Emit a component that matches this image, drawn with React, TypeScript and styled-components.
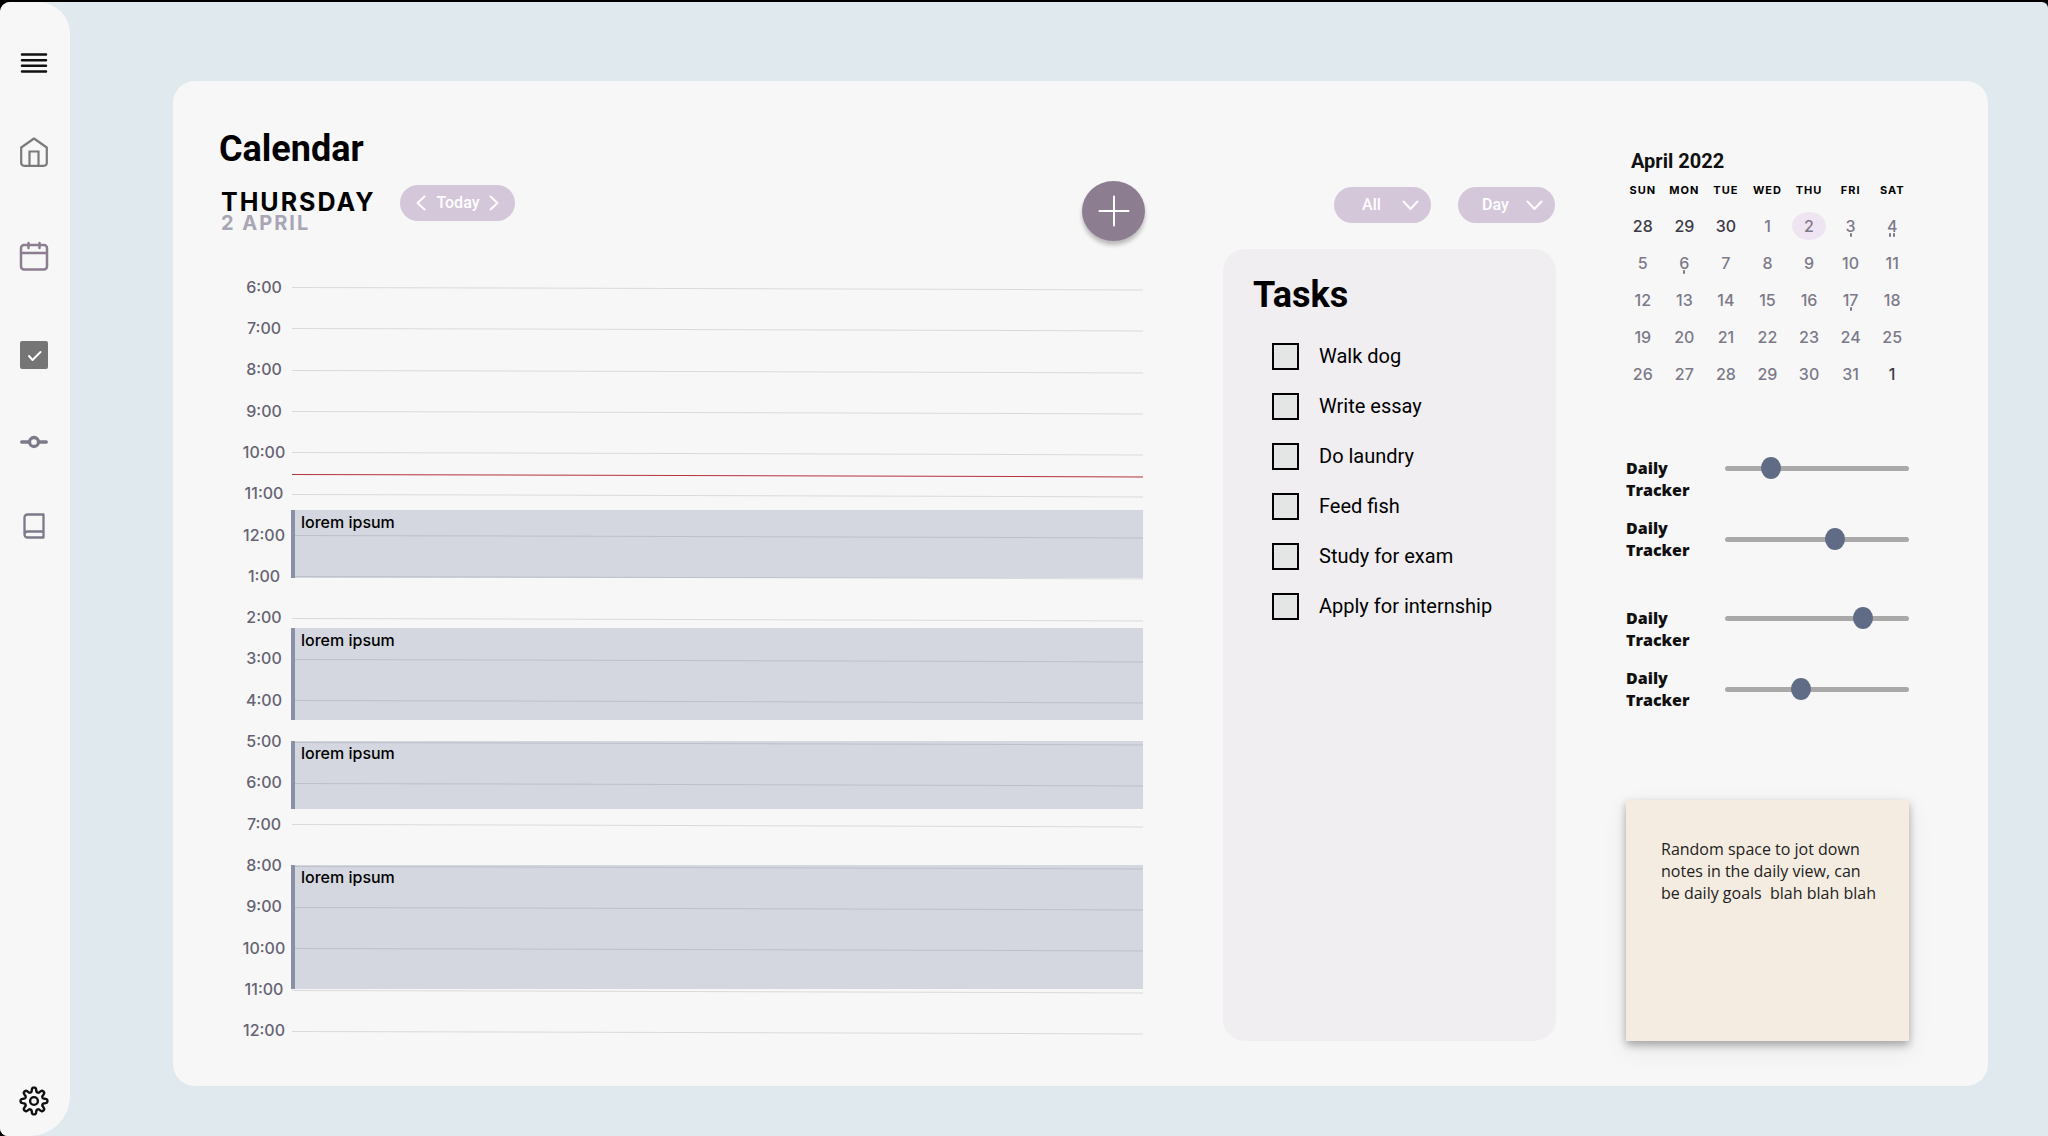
import React from "react";
import styled, { createGlobalStyle } from "styled-components";

const colors = {
  page: "#e0e9ee",
  surface: "#f7f7f7",
  lilac: "#d4c7d9",
  plum: "#8d7d91",
  ink: "#101010",
  muted: "#7c7a89",
  slate: "#606b85",
};

const plex = `Inter, "Liberation Sans", sans-serif`;
const roboto = `Roboto, "Liberation Sans", sans-serif`;
const rounded = `"Open Sans", "Noto Sans", sans-serif`;

const GlobalStyle = createGlobalStyle`
  *, *::before, *::after { box-sizing: border-box; }
  body { margin: 0; background: #000; color: #000; font-family: ${roboto}; }
  h1, h2, p, ul { margin: 0; padding: 0; }
  button, input, select, textarea { font: inherit; color: inherit; margin: 0; }
  button { border: 0; padding: 0; background: none; cursor: pointer; }
`;

const Frame = styled.div`
  border-top: 2px solid #000;
  min-height: 100vh;
  display: flex;
  background: #000;
`;

const Shell = styled.div`
  flex: 1;
  display: flex;
  background: ${colors.page};
  border-radius: 10px 6px 0 8px;
  overflow: hidden;
`;

const Sidebar = styled.nav`
  flex: 0 0 70px;
  display: flex;
  flex-direction: column;
  align-items: center;
  padding: 45px 3px 19px 0;
  background: ${colors.surface};
  border-radius: 0 32px 40px 0;
`;

const NavButton = styled.button<{ $gap?: number; $color: string; $last?: boolean }>`
  width: 32px;
  height: 32px;
  display: grid;
  place-items: center;
  color: ${(p) => p.$color};
  margin-top: ${(p) => (p.$last ? "auto" : `${p.$gap ?? 0}px`)};

  svg { display: block; }
`;

const Main = styled.main`
  flex: 1;
  min-width: 0;
  display: flex;
  padding: 79px 60px 50px 103px;
`;

const Panel = styled.div`
  flex: 1;
  min-width: 0;
  display: grid;
  grid-template-columns: minmax(0, 1fr) 333px 283px;
  column-gap: 70px;
  padding: 47px 79px 35px 46px;
  background: ${colors.surface};
  border-radius: 22px;
`;

const Schedule = styled.section`
  display: flex;
  flex-direction: column;
  padding-right: 8px;
`;

const PageTitle = styled.h1`
  font: 700 36px/42px ${roboto};
`;

const DayBar = styled.div`
  display: flex;
  align-items: center;
  margin-top: 11px;
  padding-left: 2px;
`;

const DateBlock = styled.div`
  font-family: ${plex};
  font-weight: 700;
  letter-spacing: 2px;
`;

const Weekday = styled.p`
  font-size: 25px;
  line-height: 23px;
`;

const DayMonth = styled.p`
  font-size: 20px;
  line-height: 18px;
  color: #a8a6b5;
`;

const Stepper = styled.div`
  display: flex;
  align-items: center;
  justify-content: space-between;
  align-self: flex-start;
  width: 115px;
  height: 36px;
  margin: 4px 0 0 25px;
  padding: 0 16px;
  border-radius: 18px;
  background: ${colors.lilac};
  color: #fff;
  font: 500 16px/20px ${roboto};

  svg { display: block; }
`;

const AddButton = styled.button`
  width: 63px;
  height: 60px;
  margin-left: auto;
  display: grid;
  place-items: center;
  border-radius: 50%;
  background: ${colors.plum};
  color: #fff;
  box-shadow: 0 4px 4px rgba(0, 0, 0, 0.25);
`;

const Timeline = styled.div`
  position: relative;
  flex: 1;
  margin-top: 25px;
  padding-left: 17px;
  display: grid;
  grid-auto-rows: minmax(32px, 1fr);
`;

const HourRow = styled.div`
  display: flex;
  align-items: center;
  padding-right: 2px;
`;

const HourLabel = styled.span`
  flex: 0 0 56px;
  text-align: center;
  color: #666472;
  font: 500 16px/20px ${plex};
`;

const HourLine = styled.span`
  flex: 1;
  height: 1px;
  margin-top: 2px;
  background: #dadada;
  transform: skewY(0.16deg);
  transform-origin: left;
`;

const EventLayer = styled.div`
  position: absolute;
  top: calc(100% / 38);
  bottom: calc(100% / 38);
  left: 72px;
  right: 2px;
`;

const EventBlock = styled.article`
  position: absolute;
  left: 0;
  right: 0;
  padding-left: 6px;
  border-left: 4px solid #8991a5;
  background: rgba(94, 106, 142, 0.23);
  background-clip: padding-box;
  font: 500 16px/24px ${plex};
`;

const NowLine = styled.div`
  position: absolute;
  left: 1px;
  right: 0;
  height: 1px;
  background: #b8333b;
  transform: skewY(0.16deg);
  transform-origin: left;
`;

const TasksColumn = styled.section`
  display: flex;
  flex-direction: column;
  padding: 59px 0 10px;
`;

const Filters = styled.div`
  display: flex;
  justify-content: flex-end;
  gap: 27px;
  padding-right: 1px;
`;

const FilterBox = styled.div`
  position: relative;
  color: #fff;

  svg {
    position: absolute;
    right: 12px;
    top: 13px;
    pointer-events: none;
  }
`;

const FilterSelect = styled.select`
  appearance: none;
  display: block;
  width: 97px;
  height: 36px;
  padding: 0 22px 0 0;
  border: 0;
  border-radius: 18px;
  background: ${colors.lilac};
  font: 500 16px/20px ${roboto};
  text-align: center;
  text-align-last: center;
`;

const TaskCard = styled.div`
  flex: 1;
  margin-top: 26px;
  padding: 25px 30px;
  border-radius: 22px;
  background: #f0eef1;
`;

const TaskTitle = styled.h2`
  font: 700 36px/42px ${roboto};
`;

const TaskList = styled.ul`
  list-style: none;
  display: grid;
  gap: 23px;
  margin-top: 27px;
  padding-left: 19px;
`;

const TaskLabel = styled.label`
  display: flex;
  align-items: center;
  gap: 20px;
  font: 400 20px/27px ${roboto};
`;

const TaskCheck = styled.input`
  appearance: none;
  width: 27px;
  height: 27px;
  border: 2px solid #000;
  background: #e4e5e5;

  &:checked { background: ${colors.slate}; }
`;

const Aside = styled.aside`
  display: flex;
  flex-direction: column;
  padding: 21px 0 10px;
`;

const MonthTitle = styled.h2`
  padding-left: 5px;
  color: ${colors.ink};
  font: 700 20px/24px ${roboto};
`;

const MonthTable = styled.table`
  width: calc(100% + 8px);
  margin: 0 -4px;
  border-collapse: collapse;
  table-layout: fixed;
  font-family: ${plex};

  th {
    height: 34px;
    padding: 0;
    font-size: 11px;
    font-weight: 700;
    letter-spacing: 1px;
  }

  td {
    height: 37px;
    padding: 0;
    text-align: center;
  }
`;

const DayButton = styled.button<{ $outside: boolean; $selected: boolean }>`
  position: relative;
  width: 34px;
  height: 28px;
  border-radius: 50%;
  background: ${(p) => (p.$selected ? "#efe5f2" : "transparent")};
  color: ${(p) => (p.$outside ? "#3c3a47" : colors.muted)};
  font: 500 16px/28px ${plex};
`;

const Marks = styled.span`
  position: absolute;
  left: 0;
  right: 0;
  bottom: 3px;
  display: flex;
  justify-content: center;
  gap: 2px;

  i {
    width: 2px;
    height: 4px;
    border-radius: 1px;
    background: ${colors.muted};
  }
`;

const Trackers = styled.div`
  display: grid;
  gap: 46px;
  margin-top: 65px;
`;

const TrackerPair = styled.div`
  display: grid;
  gap: 16px;
`;

const TrackerRow = styled.label<{ $centered: boolean }>`
  display: grid;
  grid-template-columns: 72px 1fr;
  column-gap: 27px;
  align-items: ${(p) => (p.$centered ? "center" : "start")};
  color: ${colors.ink};
  font: 800 16px/22px ${rounded};
`;

const Slider = styled.input`
  appearance: none;
  width: 100%;
  height: 22px;
  background: transparent;

  &::-webkit-slider-runnable-track {
    height: 5px;
    border-radius: 3px;
    background: #a9a9a9;
  }

  &::-webkit-slider-thumb {
    appearance: none;
    width: 20px;
    height: 22px;
    margin-top: -9px;
    border-radius: 50%;
    background: ${colors.slate};
  }
`;

const Note = styled.textarea`
  display: block;
  width: 100%;
  height: 241px;
  margin-top: auto;
  padding: 38px 30px 38px 35px;
  border: 0;
  outline: 0;
  resize: none;
  background: #f5ece1;
  color: #222;
  font: 400 16px/22px ${rounded};
  box-shadow: 0 4px 8px rgba(0, 0, 0, 0.3), 0 8px 24px rgba(0, 0, 0, 0.08);
`;

const MenuIcon = () => (
  <svg width="28" height="20" viewBox="0 0 28 20" stroke="currentColor" strokeWidth="2.5" strokeLinecap="round">
    <path d="M2 1.600h24M2 7.200h24M2 12.800h24M2 18.400h24" />
  </svg>
);

const HomeIcon = () => (
  <svg width="28" height="30" viewBox="0 0 28 30" fill="none" stroke="currentColor" strokeWidth="2.2" strokeLinejoin="round">
    <path d="M1.200 10.500 14 1.500l12.800 9V26a3 3 0 0 1-3 2.800H4.200a3 3 0 0 1-3-2.800Z" />
    <path d="M9.500 29V14.500h9V29" strokeLinejoin="miter" />
  </svg>
);

const CalendarIcon = () => (
  <svg width="30" height="30" viewBox="0 0 30 30" fill="none" stroke="currentColor" strokeWidth="2.5" strokeLinecap="round">
    <rect x="2" y="4" width="26" height="24.500" rx="3" />
    <path d="M2 12h26M9.500 2v5M20.500 2v5" />
  </svg>
);

const CheckIcon = () => (
  <svg width="28" height="28" viewBox="0 0 28 28" fill="none">
    <rect width="28" height="28" rx="2" fill="currentColor" />
    <path d="m9 15 3.500 4 8-8" stroke="#fff" strokeWidth="2" strokeLinecap="round" strokeLinejoin="round" />
  </svg>
);

const CommitIcon = () => (
  <svg width="28" height="14" viewBox="0 0 28 14" fill="none" stroke="currentColor" strokeWidth="3.300" strokeLinecap="round">
    <circle cx="14" cy="7" r="4.500" />
    <path d="M1.700 7H9M19 7h7.300" />
  </svg>
);

const BookIcon = () => (
  <svg width="22" height="26" viewBox="0 0 22 26" fill="none" stroke="currentColor" strokeWidth="2.300" strokeLinejoin="round">
    <path d="M20.500 18.500H4.500a3 3 0 0 0 0 6h16V1.500h-16a3 3 0 0 0-3 3v17" />
  </svg>
);

const gearPath = (() => {
  const points: string[] = [];
  const steps = 160;
  for (let i = 0; i < steps; i += 1) {
    const a = (i / steps) * Math.PI * 2;
    const wave = Math.tanh(1.8 * Math.cos(a * 8)) / Math.tanh(1.8);
    const r = 11.3 + 2.1 * wave;
    points.push(`${(15 + r * Math.sin(a)).toFixed(2)} ${(15 - r * Math.cos(a)).toFixed(2)}`);
  }
  return `M${points.join("L")}Z`;
})();

const GearIcon = () => (
  <svg width="30" height="30" viewBox="0 0 30 30" fill="none" stroke="currentColor" strokeWidth="2.400" strokeLinejoin="round">
    <path d={gearPath} />
    <circle cx="15" cy="15" r="3.900" />
  </svg>
);

const Chevron = ({ d, width, height }: { d: string; width: number; height: number }) => (
  <svg width={width} height={height} viewBox={`0 0 ${width} ${height}`} fill="none" stroke="currentColor" strokeWidth="2" strokeLinecap="round" strokeLinejoin="round">
    <path d={d} />
  </svg>
);

const hours = [6, 7, 8, 9, 10, 11, 12, 1, 2, 3, 4, 5, 6, 7, 8, 9, 10, 11, 12];
const span = hours.length - 1;
const percent = (value: number) => `${(value / span) * 100}%`;

const events = [
  { start: 5.4, end: 7.05 },
  { start: 8.26, end: 10.5 },
  { start: 11, end: 12.65 },
  { start: 14, end: 17 },
];

const tasks = ["Walk dog", "Write essay", "Do laundry", "Feed fish", "Study for exam", "Apply for internship"];

const weekdays = ["SUN", "MON", "TUE", "WED", "THU", "FRI", "SAT"];
const weeks = [
  [28, 29, 30, 1, 2, 3, 4],
  [5, 6, 7, 8, 9, 10, 11],
  [12, 13, 14, 15, 16, 17, 18],
  [19, 20, 21, 22, 23, 24, 25],
  [26, 27, 28, 29, 30, 31, 1],
];
const marks: Record<number, number> = { 3: 1, 4: 2, 6: 1, 17: 1 };

const trackerPairs = [
  [22, 61],
  [78, 40],
];

const Filter = ({ label, options }: { label: string; options: string[] }) => (
  <FilterBox>
    <FilterSelect aria-label={label} defaultValue={options[0]}>
      {options.map((option) => (
        <option key={option}>{option}</option>
      ))}
    </FilterSelect>
    <Chevron width={17} height={11} d="M1.500 1.500 8.500 9l7-7.500" />
  </FilterBox>
);

export default function App() {
  return (
    <Frame>
      <GlobalStyle />
      <Shell>
        <Sidebar aria-label="Main">
          <NavButton aria-label="Menu" $color="#101010"><MenuIcon /></NavButton>
          <NavButton aria-label="Home" $gap={57} $color="#7b7b7b"><HomeIcon /></NavButton>
          <NavButton aria-label="Calendar" $gap={72} $color={colors.plum}><CalendarIcon /></NavButton>
          <NavButton aria-label="Tasks" $gap={67} $color="#757575"><CheckIcon /></NavButton>
          <NavButton aria-label="Trackers" $gap={55} $color={colors.muted}><CommitIcon /></NavButton>
          <NavButton aria-label="Journal" $gap={52} $color={colors.muted}><BookIcon /></NavButton>
          <NavButton aria-label="Settings" $last $color="#101010"><GearIcon /></NavButton>
        </Sidebar>
        <Main>
          <Panel>
            <Schedule>
              <PageTitle>Calendar</PageTitle>
              <DayBar>
                <DateBlock>
                  <Weekday>THURSDAY</Weekday>
                  <DayMonth>2 APRIL</DayMonth>
                </DateBlock>
                <Stepper>
                  <button aria-label="Previous day"><Chevron width={10} height={16} d="M8.500 1.500 1.500 8l7 6.500" /></button>
                  <button>Today</button>
                  <button aria-label="Next day"><Chevron width={10} height={16} d="M1.500 1.500 8.500 8l-7 6.500" /></button>
                </Stepper>
                <AddButton aria-label="Add event">
                  <svg width="32" height="32" viewBox="0 0 32 32" stroke="currentColor" strokeWidth="2" strokeLinecap="round">
                    <path d="M16 1.500v29M1.500 16h29" />
                  </svg>
                </AddButton>
              </DayBar>
              <Timeline>
                {hours.map((hour, i) => (
                  <HourRow key={i}>
                    <HourLabel>{hour}:00</HourLabel>
                    <HourLine />
                  </HourRow>
                ))}
                <EventLayer>
                  {events.map((event) => (
                    <EventBlock key={event.start} style={{ top: percent(event.start), height: percent(event.end - event.start) }}>
                      lorem ipsum
                    </EventBlock>
                  ))}
                  <NowLine style={{ top: percent(4.53) }} />
                </EventLayer>
              </Timeline>
            </Schedule>

            <TasksColumn>
              <Filters>
                <Filter label="Category" options={["All"]} />
                <Filter label="View" options={["Day"]} />
              </Filters>
              <TaskCard>
                <TaskTitle>Tasks</TaskTitle>
                <TaskList>
                  {tasks.map((task) => (
                    <li key={task}>
                      <TaskLabel>
                        <TaskCheck type="checkbox" />
                        {task}
                      </TaskLabel>
                    </li>
                  ))}
                </TaskList>
              </TaskCard>
            </TasksColumn>

            <Aside>
              <MonthTitle>April 2022</MonthTitle>
              <MonthTable>
                <thead>
                  <tr>
                    {weekdays.map((day) => (
                      <th key={day} scope="col">{day}</th>
                    ))}
                  </tr>
                </thead>
                <tbody>
                  {weeks.map((week, w) => (
                    <tr key={w}>
                      {week.map((day, d) => {
                        const outside = (w === 0 && day > 7) || (w === 4 && day < 7);
                        const count = outside ? 0 : marks[day] ?? 0;
                        return (
                          <td key={d}>
                            <DayButton $outside={outside} $selected={!outside && day === 2}>
                              {day}
                              {count > 0 && (
                                <Marks>
                                  {Array.from({ length: count }, (_, m) => (
                                    <i key={m} />
                                  ))}
                                </Marks>
                              )}
                            </DayButton>
                          </td>
                        );
                      })}
                    </tr>
                  ))}
                </tbody>
              </MonthTable>
              <Trackers>
                {trackerPairs.map((pair, p) => (
                  <TrackerPair key={p}>
                    {pair.map((value, i) => (
                      <TrackerRow key={i} $centered={i === 1}>
                        <span>Daily Tracker</span>
                        <Slider type="range" min={0} max={100} defaultValue={value} />
                      </TrackerRow>
                    ))}
                  </TrackerPair>
                ))}
              </Trackers>
              <Note
                aria-label="Daily notes"
                spellCheck={false}
                defaultValue="Random space to jot down notes in the daily view, can be daily goals  blah blah blah"
              />
            </Aside>
          </Panel>
        </Main>
      </Shell>
    </Frame>
  );
}
